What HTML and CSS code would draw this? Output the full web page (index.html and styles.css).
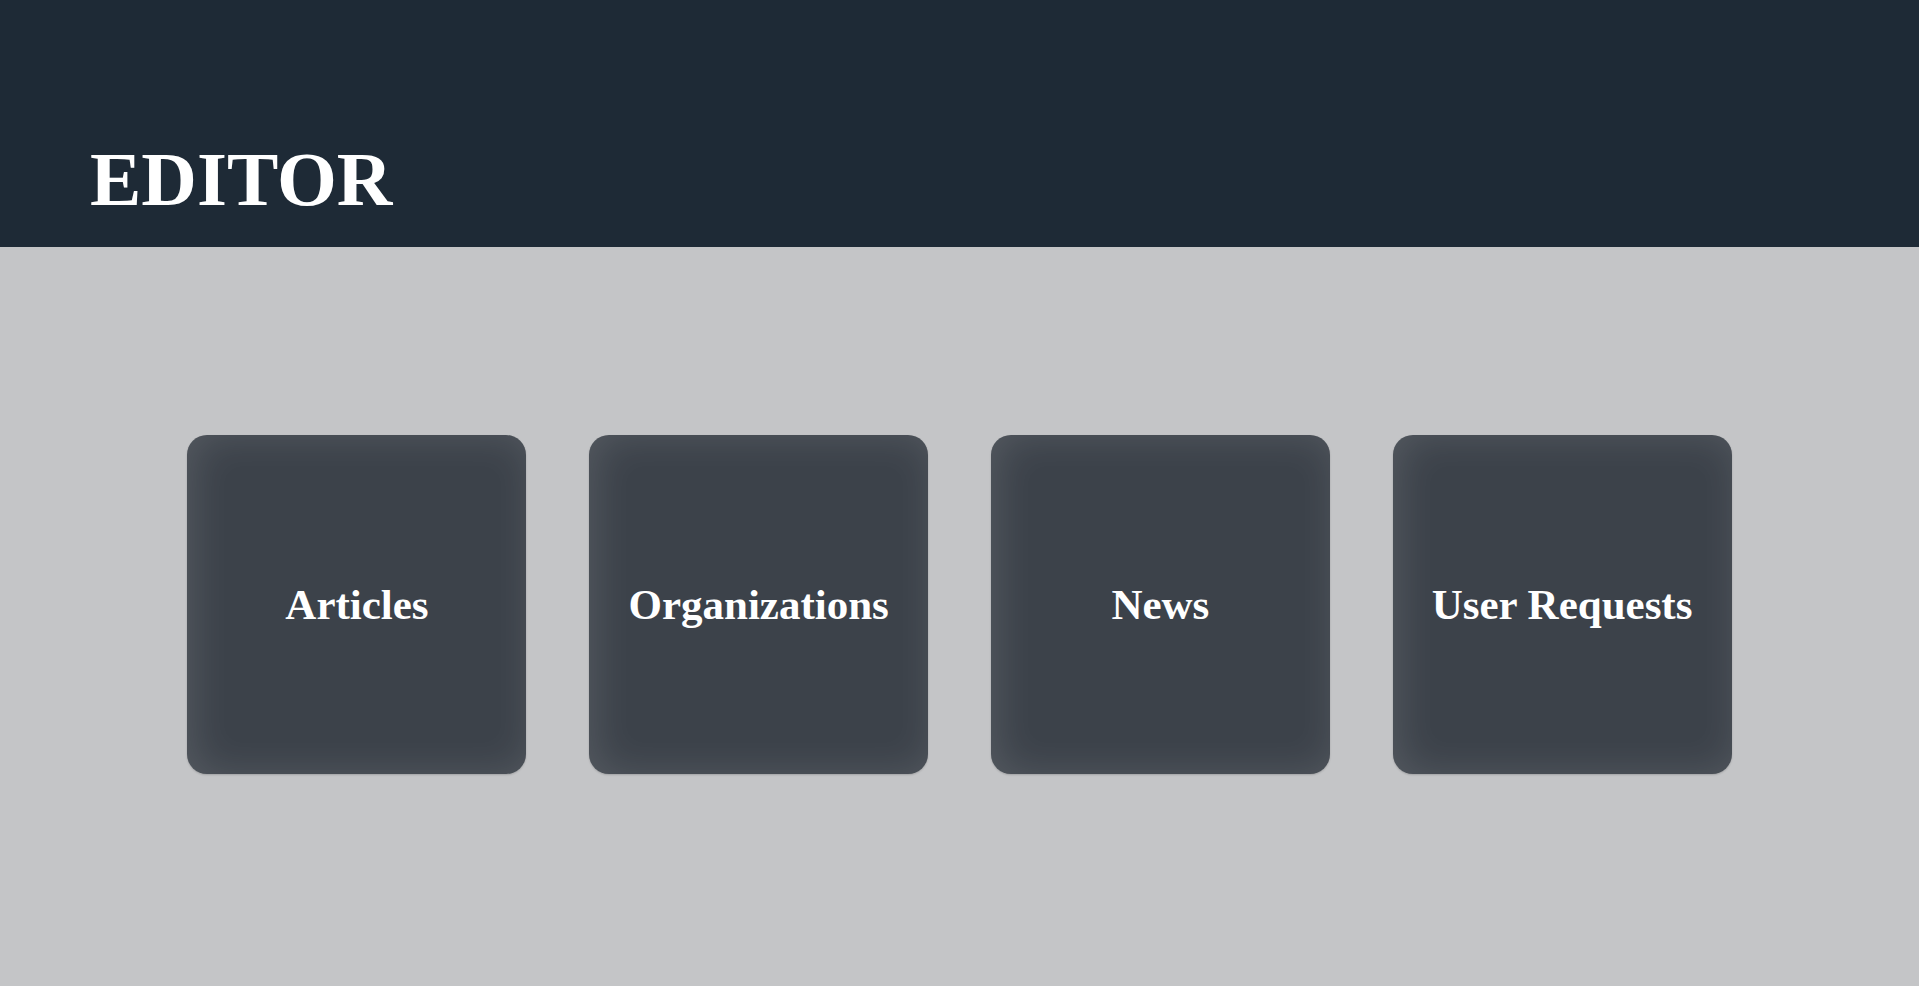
FILE: index.html
```html
<!DOCTYPE html>
<html lang="en">
<head>
<meta charset="utf-8">
<title>Editor</title>
<link rel="stylesheet" href="styles.css">
</head>
<body>
<header class="top">
  <h1 class="title">EDITOR</h1>
</header>
<main class="grid">
  <a class="card" href="#">Articles</a>
  <a class="card" href="#">Organizations</a>
  <a class="card" href="#">News</a>
  <a class="card" href="#">User Requests</a>
</main>
</body>
</html>
```
FILE: styles.css
```css
html, body {
  margin: 0;
  padding: 0;
  height: 100%;
}
body {
  background: #c4c5c7;
  font-family: "Liberation Serif", "Times New Roman", serif;
  color: #fff;
}
.top {
  background: #1e2a36;
  height: 247px;
  box-sizing: border-box;
  padding: 135px 0 0 90px;
}
.title {
  margin: 0;
  font-size: 77px;
  font-weight: bold;
  line-height: normal;
  color: #fff;
}
.grid {
  display: flex;
  justify-content: center;
  gap: 62.7px;
  padding-top: 188px;
}
.card {
  width: 339px;
  height: 339px;
  border-radius: 20px;
  background: #3c424a;
  box-shadow: inset 6px 0 40px rgba(255,255,255,0.13), 0 1px 2px rgba(0,0,0,0.18);
  display: flex;
  align-items: center;
  justify-content: center;
  color: #fff;
  text-decoration: none;
  font-size: 43px;
  font-weight: bold;
}
```
